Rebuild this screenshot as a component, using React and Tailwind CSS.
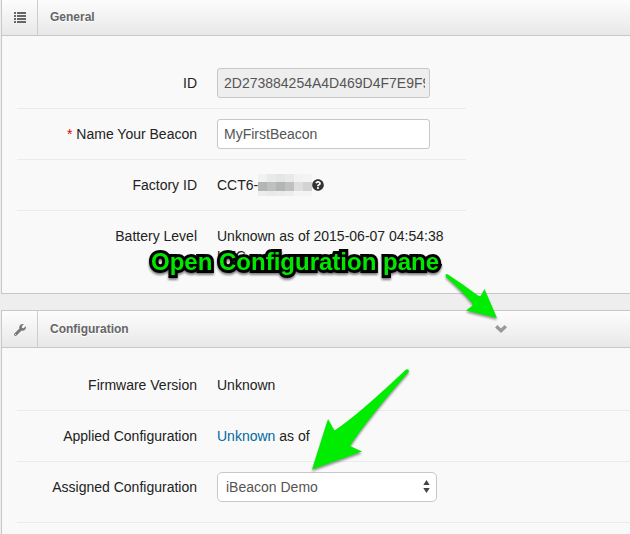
import React from 'react';
import { FaQuestionCircle, FaWrench } from 'react-icons/fa';

const ListIcon = () => (
    <svg viewBox="0 0 12 11" className="h-[11px] w-3" fill="#666" aria-hidden="true">
        {[0, 3, 6, 9].map((y) => (
            <g key={y}>
                <rect x="0" y={y} width="2" height="2" />
                <rect x="3" y={y} width="9" height="2" />
            </g>
        ))}
    </svg>
);

const ChevronIcon = () => (
    <svg viewBox="0 0 12 8" className="h-2 w-3" fill="none" stroke="#999" strokeWidth="3.4" aria-hidden="true">
        <path d="M1.2 1.3 6 5.7 10.8 1.3" />
    </svg>
);

const Panel = ({ icon, title, action, className = '', children }) => (
    <section className={`border-l border-[#c8c8c8] bg-[#f9f9f9] ${className}`}>
        <header className="flex h-[37px] items-stretch border-b border-[#c8c8c8] bg-linear-to-b from-[#fdfdfd] to-[#e8e8e8]">
            <div className="flex w-9 items-center justify-center border-r border-[#cdcdcd] pt-px">{icon}</div>
            <h2 className="flex-1 pl-3 text-xs leading-9 font-bold text-[#666] [text-shadow:0_1px_0_#fff]">{title}</h2>
            {action}
        </header>
        {children}
    </section>
);

const Row = ({ label, htmlFor, required, className = 'border-b', children }) => (
    <div className={`flex gap-5 border-[#ebebeb] py-[10px] ${className}`}>
        <label htmlFor={htmlFor} className="w-[180px] shrink-0 text-right leading-[30px]">
            {required && <span className="text-[#e00000]">* </span>}
            {label}
        </label>
        <div className="flex-1">{children}</div>
    </div>
);

const mosaic = [
    ['#f1f1f1', '#e9e9e9', '#e4e6e5', '#e9e9e9', '#f2f2f2', '#f4f4f4'],
    ['#b5b5b5', '#bcc0be', '#b4b4b4', '#c0c0c0', '#dedede', '#d2d2d2'],
    ['#ededed', '#e8eae9', '#ebebeb', '#ededed', '#f4f4f4', '#f4f4f4'],
];

const Mosaic = () => (
    <svg viewBox="0 0 54 22" className="h-[22px] w-[54px]" shapeRendering="crispEdges" aria-hidden="true">
        {mosaic.map((line, r) =>
            line.map((fill, c) => (
                <rect key={`${r}-${c}`} x={c * 9} y={[0, 8, 17][r]} width="9" height={[8, 9, 5][r]} fill={fill} />
            ))
        )}
    </svg>
);

const App = () => (
    <main className="relative flex min-h-screen flex-col overflow-hidden bg-[#eee] pl-px font-['Liberation_Sans',Arial,sans-serif] text-sm text-[#222]">
        <Panel icon={<ListIcon />} title="General" className="-mt-px border-b">
            <div className="max-w-[464px] pt-[22px] pb-[17px] pl-[15px]">
                <Row label="ID" htmlFor="beacon-id">
                    <input
                        id="beacon-id"
                        readOnly
                        defaultValue="2D273884254A4D469D4F7E9F9"
                        className="block h-[30px] w-[213px] rounded-[3px] border border-[#c8c8c8] bg-[#eee] pr-1 pl-[6px] text-[#555]"
                    />
                </Row>
                <Row label="Name Your Beacon" htmlFor="beacon-name" required>
                    <input
                        id="beacon-name"
                        defaultValue="MyFirstBeacon"
                        className="block h-[30px] w-[213px] rounded-[3px] border border-[#c8c8c8] bg-white pr-1 pl-[6px] text-[#555]"
                    />
                </Row>
                <Row label="Factory ID">
                    <div className="flex h-[30px] items-center">
                        CCT6-
                        <Mosaic />
                        <FaQuestionCircle className="size-3 text-[#333]" />
                    </div>
                </Row>
                <Row label="Battery Level" className="">
                    <p className="pt-[5px] leading-5">Unknown as of 2015-06-07 04:54:38 UTC</p>
                </Row>
            </div>
        </Panel>

        <Panel
            icon={<FaWrench className="size-3 text-[#777]" />}
            title="Configuration"
            className="mt-4 grow border-t"
            action={
                <button aria-label="Toggle configuration" className="mr-[123px]">
                    <ChevronIcon />
                </button>
            }
        >
            <div className="pt-3 pl-[15px]">
                <Row label="Firmware Version">
                    <p className="leading-[30px]">Unknown</p>
                </Row>
                <Row label="Applied Configuration">
                    <p className="leading-[30px]">
                        <a href="#unknown" className="text-[#0069a0]">Unknown</a> as of
                    </p>
                </Row>
                <Row label="Assigned Configuration" htmlFor="assigned">
                    <div className="relative mb-[10px] w-[220px]">
                        <select
                            id="assigned"
                            className="block h-[30px] w-full appearance-none rounded-[5px] border border-[#c8c8c8] bg-white pl-2 text-[#555]"
                        >
                            <option>iBeacon Demo</option>
                        </select>
                        <svg viewBox="0 0 7 13" className="pointer-events-none absolute top-2 right-[7px] h-[13px] w-[7px]" fill="#444" aria-hidden="true">
                            <path d="M0.3 5 3.5 0 6.7 5ZM0.3 8h6.4L3.5 13Z" />
                        </svg>
                    </div>
                </Row>
            </div>
        </Panel>

        {/* callouts drawn over the form */}
        <p className="absolute top-[246px] left-[151px] text-2xl leading-8 font-bold whitespace-nowrap text-[#00e800] [-webkit-text-stroke:6px_#000] [paint-order:stroke_fill] [stroke-linejoin:round] drop-shadow-[0_2px_1px_rgba(0,0,0,0.5)]">
            Open Configuration pane
        </p>
        <svg
            viewBox="0 0 630 534"
            className="pointer-events-none absolute top-0 left-0 h-[534px] w-[630px] drop-shadow-[0_2px_1px_rgba(0,0,0,0.4)]"
            fill="#00ec00"
            aria-hidden="true"
        >
            <path d="M445.5 275Q446 273.5 448 274.5Q464 285 478 295.5Q480 296.5 481 295.5L484.5 289 497 318 466 310.5 472 306Q473 305 472 303Q462 291 446 277Z" />
            <path d="M406 369.5Q409 368.5 409 371.5Q366 421 350 446L362 451.5 312 469.5 328 419 334.5 430.5Q358 415 406 369.5Z" />
        </svg>
    </main>
);

export default App;
